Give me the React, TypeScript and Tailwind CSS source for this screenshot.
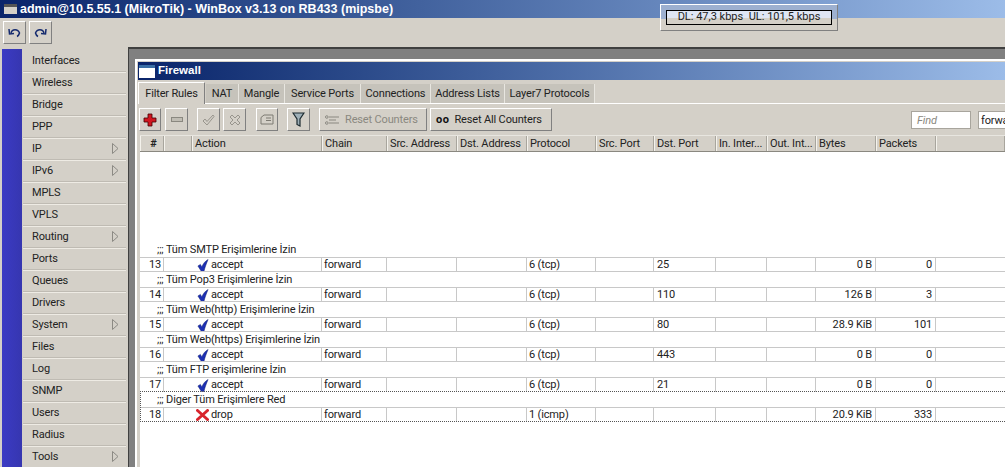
import React from "react";

const GRID = "grid grid-cols-[24px_28px_130px_65px_70px_70px_69px_58px_62px_51px_49px_60px_60px_1fr]";

const MENU: [string, boolean][] = [
  ["Interfaces", false], ["Wireless", false], ["Bridge", false], ["PPP", false], ["IP", true], ["IPv6", true],
  ["MPLS", false], ["VPLS", false], ["Routing", true], ["Ports", false], ["Queues", false], ["Drivers", false],
  ["System", true], ["Files", false], ["Log", false], ["SNMP", false], ["Users", false], ["Radius", false], ["Tools", true],
];

const TABS: [string, string][] = [
  ["NAT", "w-[33px]"], ["Mangle", "w-[46px]"], ["Service Ports", "w-[76px]"],
  ["Connections", "w-[70px]"], ["Address Lists", "w-[74px]"], ["Layer7 Protocols", "w-[90px]"],
];

const HEADERS = ["#", "", "Action", "Chain", "Src. Address", "Dst. Address", "Protocol", "Src. Port", "Dst. Port", "In. Inter...", "Out. Int...", "Bytes", "Packets", ""];

const RULES = [
  { comment: "Tüm SMTP Erişimlerine İzin", id: 13, action: "accept", proto: "6 (tcp)", port: "25", bytes: "0 B", packets: "0" },
  { comment: "Tüm Pop3 Erişimlerine İzin", id: 14, action: "accept", proto: "6 (tcp)", port: "110", bytes: "126 B", packets: "3" },
  { comment: "Tüm Web(http) Erişimlerine İzin", id: 15, action: "accept", proto: "6 (tcp)", port: "80", bytes: "28.9 KiB", packets: "101" },
  { comment: "Tüm Web(https) Erişimlerine İzin", id: 16, action: "accept", proto: "6 (tcp)", port: "443", bytes: "0 B", packets: "0" },
  { comment: "Tüm FTP erişimlerine İzin", id: 17, action: "accept", proto: "6 (tcp)", port: "21", bytes: "0 B", packets: "0" },
  { comment: "Diger Tüm Erişimlere Red", id: 18, action: "drop", proto: "1 (icmp)", port: "", bytes: "20.9 KiB", packets: "333" },
];

const raised = "border border-t-white border-l-white border-r-[#808080] border-b-[#808080]";

function Check() {
  return (
    <svg width="12" height="13" viewBox="0 0 12 14">
      <path d="M0.5 7.5 L3.2 5.8 L4.8 8.5 C6 5.2 8 2.5 11.5 0.5 C10 4 8 9 7 13.5 L4.3 13.5 Z" fill="#1c30b4" stroke="#0c1a70" strokeWidth="0.5" />
    </svg>
  );
}

function Cross() {
  return (
    <svg width="13" height="12" viewBox="0 0 13 12">
      <path d="M1.5 1.5 L11.5 10.5 M11.5 1.5 L1.5 10.5" stroke="#d8242c" strokeWidth="3" strokeLinecap="round" />
    </svg>
  );
}

function Arrow() {
  return (
    <svg width="7" height="11" viewBox="0 0 7 11" className="ml-auto mr-[7px]">
      <path d="M0.5 0.5 L6 5.5 L0.5 10.5 Z" fill="#d4d0c8" stroke="#8c8a84" />
    </svg>
  );
}

function ToolButton({ className, children }: { className: string; children?: React.ReactNode }) {
  return <div className={`${raised} h-[23px] flex items-center justify-center shrink-0 ${className}`}>{children}</div>;
}

function Row({ rule }: { rule: (typeof RULES)[number] }) {
  const last = rule.id === 18;
  const before = rule.id === 17;
  return (
    <div className="relative">
      <div className="h-[15px] pt-px flex items-center pl-[17px] whitespace-nowrap">;;; {rule.comment}</div>
      <div className={`${GRID} h-[15px] leading-[14px] border-t border-[#c8c8c8]`}>
        <div className="text-right pr-[2px] border-r border-[#c8c8c8]">{rule.id}</div>
        <div />
        <div className={`flex items-center gap-[2px] border-r border-[#c8c8c8] ${last ? "pl-[4px]" : "pl-[5px]"}`}>
          {last ? <Cross /> : <Check />}
          <span>{rule.action}</span>
        </div>
        <div className="pl-[2px] border-r border-[#c8c8c8]">forward</div>
        <div className="border-r border-[#c8c8c8]" />
        <div className="border-r border-[#c8c8c8]" />
        <div className="pl-[2px] border-r border-[#c8c8c8]">{rule.proto}</div>
        <div className="border-r border-[#c8c8c8]" />
        <div className="pl-[3px] border-r border-[#c8c8c8]">{rule.port}</div>
        <div className="border-r border-[#c8c8c8]" />
        <div className="border-r border-[#c8c8c8]" />
        <div className="text-right pr-[3px] border-r border-[#c8c8c8]">{rule.bytes}</div>
        <div className="text-right pr-[3px] border-r border-[#c8c8c8]">{rule.packets}</div>
        <div />
      </div>
      {/* focus rectangle of the selected rule */}
      {last && <div className="absolute -top-px left-0 right-0 bottom-0 border border-r-0 border-dotted border-[#555] pointer-events-none" />}
      {!last && !before && <div className="absolute left-0 right-0 bottom-0 border-b border-[#c8c8c8]" />}
    </div>
  );
}

export default function App() {
  return (
    <div className="w-[1005px] h-[467px] overflow-hidden relative flex flex-col bg-[#d4d0c8] text-[11px] tracking-[-0.15px] text-[#222] font-['Roboto','Liberation_Sans',sans-serif]">
      {/* main title bar */}
      <div className="h-[18px] shrink-0 flex items-center pl-[4px] gap-[3px] bg-gradient-to-r from-[#0a246a] to-[#9cbce8]">
        <div className="w-[13px] h-[10px] bg-[#d4d0c8] border-t-[3px] border-[#555]" />
        <span className="text-white font-bold text-[12.5px] tracking-normal whitespace-nowrap font-['Liberation_Sans',sans-serif]">admin@10.5.55.1 (MikroTik) - WinBox v3.13 on RB433 (mipsbe)</span>
      </div>

      {/* undo / redo */}
      <div className="h-[29px] shrink-0 flex items-start pt-[3px] pl-[3px] gap-[3px]">
        <ToolButton className="w-[23px]">
          <svg width="13" height="11" viewBox="0 0 13 11" fill="none" stroke="#152a6e" strokeWidth="1.5"><path d="M3 6 C4 1.5 10 1.5 11.5 6 C11 8 10 9 9 9.5" /><path d="M1 2 L1.5 7 L6 6.5" /></svg>
        </ToolButton>
        <ToolButton className="w-[23px]">
          <svg width="13" height="11" viewBox="0 0 13 11" fill="none" stroke="#152a6e" strokeWidth="1.5"><path d="M10 6 C9 1.5 3 1.5 1.5 6 C2 8 3 9 4 9.5" /><path d="M12 2 L11.5 7 L7 6.5" /></svg>
        </ToolButton>
      </div>

      <div className="flex-1 flex min-h-0">
        {/* side stripe */}
        <div className="w-[20px] ml-[2px] mt-[2px] shrink-0 bg-gradient-to-r from-[#3b3bc4] to-[#3636b0]" />

        {/* menu */}
        <div className="w-[103px] ml-[1px] mt-[3px] shrink-0">
          {MENU.map(([name, sub]) => (
            <div key={name} className="h-[22px] flex items-center pl-[9px] border-b border-b-[#bfbbb3] shadow-[0_1px_0_#eeebe4] text-[#222]">
              <span className="pt-[2px]">{name}</span>
              {sub && <Arrow />}
            </div>
          ))}
        </div>

        {/* workspace */}
        <div className="flex-1 ml-[2px] min-w-0 overflow-hidden bg-[#808080] border-t-2 border-l border-[#404040] pt-[10px] pl-[6px]">
          <div className="h-full border-t-2 border-l-2 border-white bg-[#d4d0c8] pl-px pt-px flex flex-col min-w-0">
            <div className="h-[18px] shrink-0 flex items-center gap-[3px] bg-gradient-to-r from-[#0a246a] to-[#9cbce8]">
              <div className="w-[16px] h-[13px] bg-white border-t-[3px] border-[#3a6ea5] ml-px" />
              <span className="text-white font-bold text-[11.5px] tracking-normal font-['Liberation_Sans',sans-serif]">Firewall</span>
            </div>

            {/* tabs */}
            <div className="h-[24px] shrink-0 flex items-end border-b border-white">
              <div className="h-[22px] w-[67px] flex items-start justify-center pt-[3px] border-t border-l border-r border-t-white border-l-white border-r-[#808080] -mb-px bg-[#d4d0c8] z-10">Filter Rules</div>
              <div className="flex h-[19px] ml-px">
                {TABS.map(([t, w]) => (
                  <div key={t} className={`${w} pt-[2px] flex items-center justify-center bg-[#c6c3bb] border-r border-[#e8e6e0] whitespace-nowrap`}>{t}</div>
                ))}
              </div>
            </div>

            {/* toolbar */}
            <div className="h-[31px] shrink-0 flex items-center pl-px text-[#222]">
              <ToolButton className="w-[22px]">
                <svg width="14" height="14" viewBox="0 0 14 14"><path d="M5 1 H9 V5 H13 V9 H9 V13 H5 V9 H1 V5 H5 Z" fill="#d01820" stroke="#400" strokeWidth="0.8" /></svg>
              </ToolButton>
              <ToolButton className="w-[23px] ml-[4px]">
                <div className="w-[12px] h-[5px] border border-[#8a8880] bg-[#c0bdb4]" />
              </ToolButton>
              <ToolButton className="w-[23px] ml-[9px]">
                <svg width="13" height="12" viewBox="0 0 13 12" fill="#d4d0c8" stroke="#98958d"><path d="M1 7 L3 5 L5 7.5 L11 1 L12 2.5 L5 11 Z" /></svg>
              </ToolButton>
              <ToolButton className="w-[23px] ml-[3px]">
                <svg width="12" height="12" viewBox="0 0 12 12" fill="#d4d0c8" stroke="#98958d"><path d="M1 3 L3 1 L6 4 L9 1 L11 3 L8 6 L11 9 L9 11 L6 8 L3 11 L1 9 L4 6 Z" /></svg>
              </ToolButton>
              <ToolButton className="w-[22px] ml-[10px]">
                <svg width="14" height="11" viewBox="0 0 14 11" fill="#d4d0c8" stroke="#7d7a72"><path d="M1 3.5 L4 1 H13 V10 H1 Z" /><path d="M6 4 H11 M6 6.5 H11" /></svg>
              </ToolButton>
              <ToolButton className="w-[23px] ml-[9px]">
                <svg width="13" height="15" viewBox="0 0 13 15"><path d="M1 1 H12 L8 7 V14 L5 12.5 V7 Z" fill="#9fb0b8" stroke="#1c2a30" strokeWidth="1.2" /></svg>
              </ToolButton>
              <ToolButton className="w-[108px] ml-[9px] justify-start pl-[5px] pt-px gap-[6px] text-[#8a8880] whitespace-nowrap">
                <svg width="14" height="10" viewBox="0 0 14 10" fill="none" stroke="#8a8880"><circle cx="1.8" cy="2" r="1.3" /><circle cx="1.8" cy="8" r="1.3" /><path d="M4 2 H14 M4 5 H11 M4 8 H14" /></svg>
                <span>Reset Counters</span>
              </ToolButton>
              <ToolButton className="w-[122px] ml-[3px] justify-start pl-[5px] pt-px gap-[5px] whitespace-nowrap">
                <span className="font-bold tracking-[0.5px] text-[#111]">oo</span>
                <span>Reset All Counters</span>
              </ToolButton>
              <div className="w-[60px] h-[18px] ml-[359px] shrink-0 bg-white border border-[#a8a59d] pl-[5px] italic text-[#8a8880] leading-[17px]">Find</div>
              <div className="w-[60px] h-[18px] ml-[7px] shrink-0 bg-white border border-[#a8a59d] pl-[2px] leading-[17px]">forward</div>
            </div>

            {/* table */}
            <div className="flex-1 min-h-0 ml-[2px] flex flex-col">
              <div className={`${GRID} h-[17px] shrink-0 border-y border-t-[#e8e6e0] border-b-[#8a8880]`}>
                {HEADERS.map((h, i) => (
                  <div key={i} className={`flex items-center pl-[2px] pt-px whitespace-nowrap overflow-hidden border-l border-[#f4f2ec] shadow-[inset_-1px_0_0_#a8a59d] ${i === 0 ? "justify-center pl-0 font-bold" : ""}`}>{h}</div>
                ))}
              </div>
              <div className="flex-1 bg-white pt-[90px] text-[#222]">
                {RULES.map((r) => <Row key={r.id} rule={r} />)}
              </div>
            </div>
          </div>
        </div>
      </div>

      {/* traffic box floats over the title bar */}
      <div className="absolute left-[660px] top-[4px] w-[178px] h-[27px] border border-t-white border-l-white border-r-[#808080] border-b-[#808080] bg-[linear-gradient(to_bottom,#9db0d0_0,#9db0d0_14px,#d4d0c8_14px)] p-[5px]">
        <div className="h-[15px] border border-black tracking-normal flex items-center justify-center bg-[linear-gradient(to_bottom,#dfe6f4_0,#dfe6f4_7px,#d4d0c8_7px)] whitespace-pre">DL: 47,3 kbps  UL: 101,5 kbps</div>
      </div>
    </div>
  );
}
